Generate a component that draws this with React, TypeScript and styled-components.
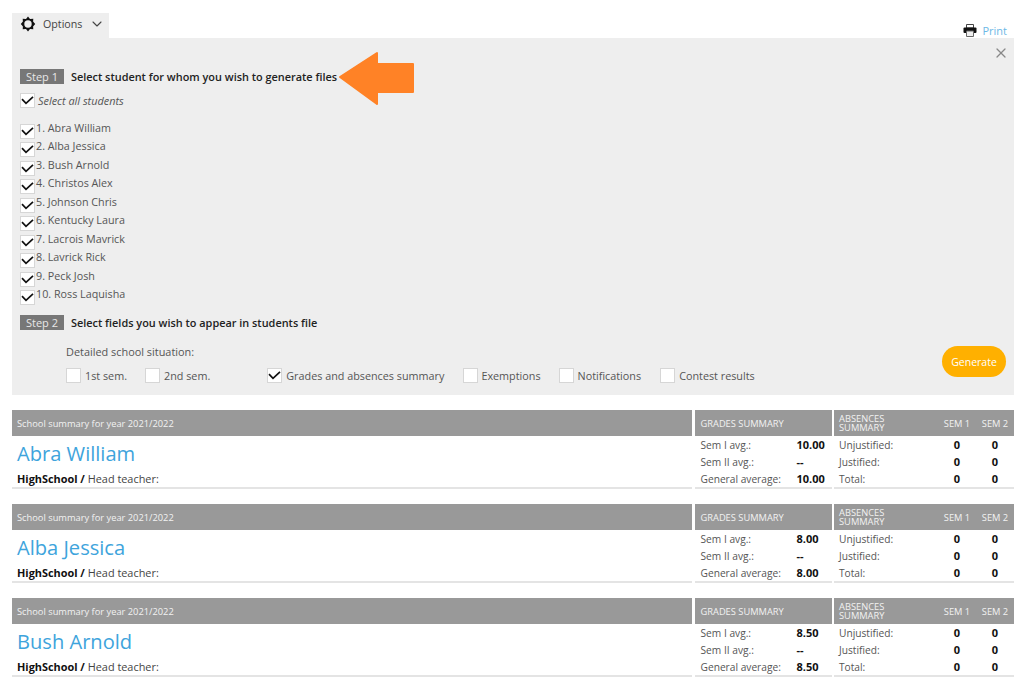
import React from "react";
import styled, { createGlobalStyle } from "styled-components";
import { X, ChevronDown } from "lucide-react";

const Global = createGlobalStyle`
  html, body { margin: 0; padding: 0; background: #fff; }
  body { font-family: "Open Sans", "Liberation Sans", sans-serif; color: #555; font-size: 11px; overflow: hidden; }
`;
const Page = styled.div`
  width: 1024px; height: 682px; padding: 13px 10px 0 12px; box-sizing: border-box; overflow: hidden;
`;
const TopBar = styled.div`
  display: flex; justify-content: space-between; align-items: flex-end; height: 25px;
`;
const Tab = styled.div`
  width: 97px; height: 25px; background: #eeeeee; display: flex; align-items: center; box-sizing: border-box;
  padding: 0 0 3px 8px; font-size: 10.7px; color: #444; gap: 7px;
`;
const PrintLink = styled.div`
  display: flex; align-items: center; gap: 5px; color: #6db8e6; font-size: 11px; padding-right: 7px; line-height: 15px;
`;
const Panel = styled.section`
  position: relative; background: #eeeeee; height: 357px; box-sizing: border-box; padding: 31px 8px 0 8px;
`;
const CloseBtn = styled.div`
  position: absolute; top: 7px; right: 5px; color: #888; display: flex;
`;
const ArrowMark = styled.svg`
  position: absolute; left: 326px; top: 13px;
`;
const StepRow = styled.div<{ $top?: number }>`
  display: flex; align-items: center; gap: 7px; height: 15px; margin-top: ${(p) => p.$top ?? 0}px;
`;
const StepBadge = styled.span`
  width: 44px; height: 15px; background: #777; color: #e8e8e8; font-size: 11px; text-align: center; line-height: 15px;
`;
const StepTitle = styled.span`
  font-size: 10.9px; font-weight: 600; color: #222;
`;
const SelectAll = styled.label`
  display: flex; align-items: flex-start; margin-top: 9px; height: 26px; font-style: italic; font-size: 10.9px; gap: 3px; line-height: 16px; color: #555;
`;
const Box = styled.span`
  width: 15px; height: 15px; background: #fff; border: 1px solid #d6d6d6; box-sizing: border-box; display: flex; flex: none; position: relative;
`;
const TickMark = styled.svg`
  position: absolute; left: -1px; top: -1px; overflow: visible;
`;
const StudentList = styled.div`
  display: flex; flex-direction: column;
`;
const StudentRow = styled.div`
  display: flex; height: 18.45px; gap: 1px; font-size: 10.75px; line-height: 18px; color: #555;
  & > ${Box} { margin-top: 5px; }
`;
const Bottom = styled.div`
  display: flex; justify-content: space-between; align-items: flex-start;
`;
const Fields = styled.div`
  padding: 15px 0 0 46px;
`;
const FieldTitle = styled.div`
  font-size: 10.9px; line-height: 14px; color: #555;
`;
const FieldRow = styled.div`
  display: flex; margin-top: 9px; align-items: center;
`;
const FieldItem = styled.div<{ $after: number; $gap: number }>`
  display: flex; align-items: center; gap: ${(p) => p.$gap}px; margin-right: ${(p) => p.$after}px; font-size: 10.8px; line-height: 15px; color: #555;
`;
const Generate = styled.button`
  width: 64px; height: 31px; border: 0; border-radius: 16px; background: #ffb000; color: #fff; font: 400 10.5px "Open Sans", sans-serif; margin-top: 16px;
`;
const Summary = styled.article`
  display: grid; grid-template-columns: 680px 137px 180px; column-gap: 2.5px; margin-top: 15px;
`;
const Head = styled.div`
  height: 26px; background: #999; color: #f2f2f2; font-size: 9.3px; display: flex; align-items: center; padding: 1px 6px 0; box-sizing: border-box;
`;
const HeadWide = styled(Head)`
  padding: 1px 5px 0;
`;
const AbsHead = styled(Head)`
  display: grid; grid-template-columns: 99px 38px 38px; justify-items: start; padding: 0 0 0 5px; line-height: 9px;
`;
const SemLabel = styled.span`
  justify-self: center;
`;
const Body = styled.div`
  height: 53px; box-sizing: border-box; border-bottom: 2px solid #e4e4e4;
`;
const NameBody = styled(Body)`
  padding-left: 5px; display: flex; flex-direction: column;
`;
const Name = styled.div`
  font-size: 20.1px; line-height: 27px; font-weight: 500; color: #3ea4dc; margin-top: 4px;
`;
const School = styled.div`
  font-size: 10.9px; line-height: 15px; margin-top: 4px; color: #444;
  b { font-weight: 700; color: #111; }
`;
const DataRows = styled(Body)`
  padding: 1px 0 0 6px; display: flex; flex-direction: column;
`;
const AbsRows = styled(DataRows)`
  padding-left: 5px;
`;
const DataRow = styled.div`
  display: grid; grid-template-columns: 96px 1fr; height: 17px; line-height: 17px; font-size: 10.2px; color: #555;
  b { color: #111; font-weight: 700; font-size: 11px; line-height: 16px; }
`;
const AbsRow = styled(DataRow)`
  grid-template-columns: 99px 38px 38px;
  b { text-align: center; }
`;

const Gear = () => (
  <svg width="16" height="16" viewBox="0 0 16 16" fill="none">
    <path d="M8 .6 10 3 13.3 2.7 13.1 5.6 15.2 8 13.1 10.4 13.3 13.3 10 13 8 15.4 6 13 2.7 13.3 2.9 10.4.8 8 2.9 5.6 2.7 2.7 6 3Z" fill="#111" />
    <circle cx="8" cy="8" r="3.7" fill="#eee" />
  </svg>
);
const Printer = () => (
  <svg width="14" height="13" viewBox="0 0 14 13">
    <path d="M3.5 .5h7v3.5h-7z" fill="#fff" stroke="#444" />
    <rect x=".5" y="3.5" width="13" height="5.5" rx="1" fill="#111" />
    <path d="M3.5 7h7v5.5h-7z" fill="#eee" stroke="#666" />
  </svg>
);
const Tick = () => (
  <TickMark width="15" height="15" viewBox="0 0 15 15" fill="none">
    <path d="M2 6.2 6 10.4 13 3.8" stroke="#111" strokeWidth="1.7" />
  </TickMark>
);

const students = ["1. Abra William", "2. Alba Jessica", "3. Bush Arnold", "4. Christos Alex", "5. Johnson Chris", "6. Kentucky Laura", "7. Lacrois Mavrick", "8. Lavrick Rick", "9. Peck Josh", "10. Ross Laquisha"];
const fields = [
  { t: "1st sem.", c: false, a: 18, g: 4 },
  { t: "2nd sem.", c: false, a: 57, g: 4 },
  { t: "Grades and absences summary", c: true, a: 19, g: 4 },
  { t: "Exemptions", c: false, a: 18, g: 3 },
  { t: "Notifications", c: false, a: 19, g: 4 },
  { t: "Contest results", c: false, a: 0, g: 4 },
];
const records = [
  { n: "Abra William", g: "10.00" },
  { n: "Alba Jessica", g: "8.00" },
  { n: "Bush Arnold", g: "8.50" },
];

export default function App() {
  return (
    <Page>
      <Global />
      <TopBar>
        <Tab><Gear />Options<ChevronDown size={16} strokeWidth={1.6} /></Tab>
        <PrintLink><Printer />Print</PrintLink>
      </TopBar>
      <Panel>
        <CloseBtn><X size={16} strokeWidth={1.9} /></CloseBtn>
        <ArrowMark width="78" height="56" viewBox="0 0 78 56">
          <path d="M2 26 39 2V13H75V41H39V53Z" fill="#ff8226" stroke="#ff8226" strokeWidth="2" strokeLinejoin="round" />
        </ArrowMark>
        <StepRow><StepBadge>Step 1</StepBadge><StepTitle>Select student for whom you wish to generate files</StepTitle></StepRow>
        <SelectAll><Box><Tick /></Box>Select all students</SelectAll>
        <StudentList>
          {students.map((s) => (
            <StudentRow key={s}><Box><Tick /></Box>{s}</StudentRow>
          ))}
        </StudentList>
        <StepRow $top={12}><StepBadge>Step 2</StepBadge><StepTitle>Select fields you wish to appear in students file</StepTitle></StepRow>
        <Bottom>
          <Fields>
            <FieldTitle>Detailed school situation:</FieldTitle>
            <FieldRow>
              {fields.map((f) => (
                <FieldItem key={f.t} $after={f.a} $gap={f.g}><Box>{f.c && <Tick />}</Box>{f.t}</FieldItem>
              ))}
            </FieldRow>
          </Fields>
          <Generate>Generate</Generate>
        </Bottom>
      </Panel>
      {records.map((r) => (
        <Summary key={r.n}>
          <HeadWide>School summary for year 2021/2022</HeadWide>
          <Head>GRADES SUMMARY</Head>
          <AbsHead><span>ABSENCES<br />SUMMARY</span><SemLabel>SEM 1</SemLabel><SemLabel>SEM 2</SemLabel></AbsHead>
          <NameBody>
            <Name>{r.n}</Name>
            <School><b>HighSchool /</b> Head teacher:</School>
          </NameBody>
          <DataRows>
            <DataRow><span>Sem I avg.:</span><b>{r.g}</b></DataRow>
            <DataRow><span>Sem II avg.:</span><b>--</b></DataRow>
            <DataRow><span>General average:</span><b>{r.g}</b></DataRow>
          </DataRows>
          <AbsRows>
            <AbsRow><span>Unjustified:</span><b>0</b><b>0</b></AbsRow>
            <AbsRow><span>Justified:</span><b>0</b><b>0</b></AbsRow>
            <AbsRow><span>Total:</span><b>0</b><b>0</b></AbsRow>
          </AbsRows>
        </Summary>
      ))}
    </Page>
  );
}
